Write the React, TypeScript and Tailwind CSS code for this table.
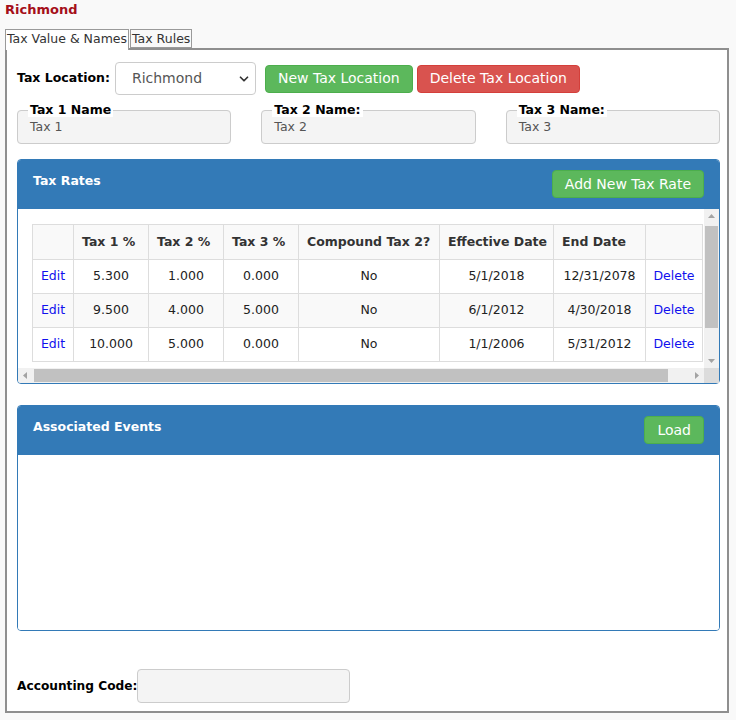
import { ChevronDown } from "lucide-react";

const rates = [
  { t1: "5.300", t2: "1.000", t3: "0.000", compound: "No", start: "5/1/2018", end: "12/31/2078" },
  { t1: "9.500", t2: "4.000", t3: "5.000", compound: "No", start: "6/1/2012", end: "4/30/2018" },
  { t1: "10.000", t2: "5.000", t3: "0.000", compound: "No", start: "1/1/2006", end: "5/31/2012" },
];

const headers = [
  { label: "", w: "w-[41px]" },
  { label: "Tax 1 %", w: "w-[75px]" },
  { label: "Tax 2 %", w: "w-[75px]" },
  { label: "Tax 3 %", w: "w-[75px]" },
  { label: "Compound Tax 2?", w: "w-[141px]" },
  { label: "Effective Date", w: "w-[114px]" },
  { label: "End Date", w: "w-[92px]" },
  { label: "", w: "w-[57px]" },
];

const NameBox = ({ legend, value }: { legend: string; value: string }) => (
  <fieldset className="rounded-[4px] border border-[#cccccc] bg-[#f4f4f4] px-[12px] pt-[2px] pb-[8px]">
    <legend className="ml-[-2px] bg-white px-[2px] text-[12.5px] leading-[14px] font-bold text-black">{legend}</legend>
    <div className="text-[12.5px] leading-[16px] text-[#555]">{value}</div>
  </fieldset>
);

const PanelHeader = ({ title, action }: { title: string; action: string }) => (
  <div className="flex h-[49px] items-start justify-between rounded-t-[3px] bg-[#337ab7] px-[15px] pt-[10px]">
    <h3 className="mt-[3px] text-[12.5px] leading-[16px] font-bold text-white">{title}</h3>
    <button className="h-[28px] rounded-[4px] border border-[#4cae4c] bg-[#5cb85c] px-[12px] text-[14px] text-white">
      {action}
    </button>
  </div>
);

const Arrow = ({ dir }: { dir: "up" | "down" | "left" | "right" }) => {
  const pts = {
    up: "4,9 7.5,5 11,9",
    down: "4,6 7.5,10 11,6",
    left: "9,4 5,7.5 9,11",
    right: "6,4 10,7.5 6,11",
  }[dir];
  return (
    <svg width="15" height="15" viewBox="0 0 15 15" className="shrink-0">
      <polygon points={pts} fill="#a3a3a3" />
    </svg>
  );
};

export default function App() {
  return (
    <div className="min-h-[720px] bg-[#f9f9f9] font-['DejaVu_Sans',sans-serif] text-[#333]">
      <div className="px-[5px] pt-[2px] pb-[11px] text-[13px] leading-[16px] font-bold text-[#a50f1a]">Richmond</div>

      <div className="flex h-[19px] items-start px-[5px]">
        <div className="relative z-10 h-[21px] border border-b-0 border-[#9a9a9a] bg-white px-[1px] text-[12.5px] leading-[17px] text-[#333]">
          Tax Value &amp; Names
        </div>
        <div className="ml-[1px] h-[19px] border border-[#9a9a9a] bg-[#f9f9f9] px-[1px] text-[12.5px] leading-[17px] text-[#333]">
          Tax Rules
        </div>
      </div>

      <div className="mx-[5px] w-[724px] border-2 border-[#8f8f8f] bg-white pt-[12px] pr-[7px] pb-[8px] pl-[10px]">
        <div className="flex items-center">
          <label className="text-[12.5px] font-bold text-black">Tax Location:</label>
          <div className="ml-[5px] flex h-[33px] w-[141px] items-center justify-between rounded-[4px] border border-[#cccccc] bg-white pr-[4px] pl-[16px]">
            <span className="text-[14px] text-[#555]">Richmond</span>
            <ChevronDown className="h-[14px] w-[14px] text-[#333]" strokeWidth={3} />
          </div>
          <button className="ml-[9px] h-[28px] rounded-[4px] border border-[#4cae4c] bg-[#5cb85c] px-[12px] text-[14px] text-white">
            New Tax Location
          </button>
          <button className="ml-[4px] h-[28px] rounded-[4px] border border-[#d43f3a] bg-[#d9534f] px-[12px] text-[14px] text-white">
            Delete Tax Location
          </button>
        </div>

        <div className="mt-[8px] grid grid-cols-3 gap-[30px]">
          <NameBox legend="Tax 1 Name" value="Tax 1" />
          <NameBox legend="Tax 2 Name:" value="Tax 2" />
          <NameBox legend="Tax 3 Name:" value="Tax 3" />
        </div>

        <div className="mt-[15px] rounded-[4px] border border-[#337ab7]">
          <PanelHeader title="Tax Rates" action="Add New Tax Rate" />
          <div className="flex">
            <div className="h-[159px] flex-1 overflow-hidden pt-[15px] pl-[14px]">
              <table className="w-[670px] table-fixed border-collapse text-[12.5px] text-[#222]">
                <thead>
                  <tr className="h-[35px] bg-[#f9f9f9]">
                    {headers.map((h, i) => (
                      <th
                        key={i}
                        className={`${h.w} border border-[#dddddd] px-[8px] text-left font-bold whitespace-nowrap text-[#333]`}
                      >
                        {h.label}
                      </th>
                    ))}
                  </tr>
                </thead>
                <tbody>
                  {rates.map((r, i) => (
                    <tr key={i} className={`h-[34px] text-center ${i % 2 === 1 ? "bg-[#f9f9f9]" : "bg-white"}`}>
                      <td className="border border-[#dddddd] text-[#1010ee]">Edit</td>
                      <td className="border border-[#dddddd]">{r.t1}</td>
                      <td className="border border-[#dddddd]">{r.t2}</td>
                      <td className="border border-[#dddddd]">{r.t3}</td>
                      <td className="border border-[#dddddd]">{r.compound}</td>
                      <td className="border border-[#dddddd]">{r.start}</td>
                      <td className="border border-[#dddddd]">{r.end}</td>
                      <td className="border border-[#dddddd] text-[#1010ee]">Delete</td>
                    </tr>
                  ))}
                </tbody>
              </table>
            </div>
            {/* vertical scrollbar */}
            <div className="flex h-[159px] w-[15px] flex-col bg-[#f1f1f1]">
              <Arrow dir="up" />
              <div className="mx-[1px] mt-[2px] h-[102px] bg-[#c1c1c1]" />
              <div className="flex-1" />
              <Arrow dir="down" />
            </div>
          </div>
          {/* horizontal scrollbar */}
          <div className="flex h-[15px] rounded-b-[3px] bg-[#f1f1f1]">
            <Arrow dir="left" />
            <div className="my-[1px] ml-[1px] w-[634px] bg-[#c1c1c1]" />
            <div className="flex-1" />
            <Arrow dir="right" />
            <div className="w-[15px] bg-[#dcdcdc]" />
          </div>
        </div>

        <div className="mt-[21px] rounded-[4px] border border-[#337ab7]">
          <PanelHeader title="Associated Events" action="Load" />
          <div className="h-[175px] rounded-b-[3px] bg-white" />
        </div>

        <div className="mt-[38px] flex items-center">
          <label className="text-[12.2px] font-bold text-black">Accounting Code:</label>
          <div className="h-[34px] w-[213px] rounded-[4px] border border-[#cccccc] bg-[#f4f4f4]" />
        </div>
      </div>
    </div>
  );
}
